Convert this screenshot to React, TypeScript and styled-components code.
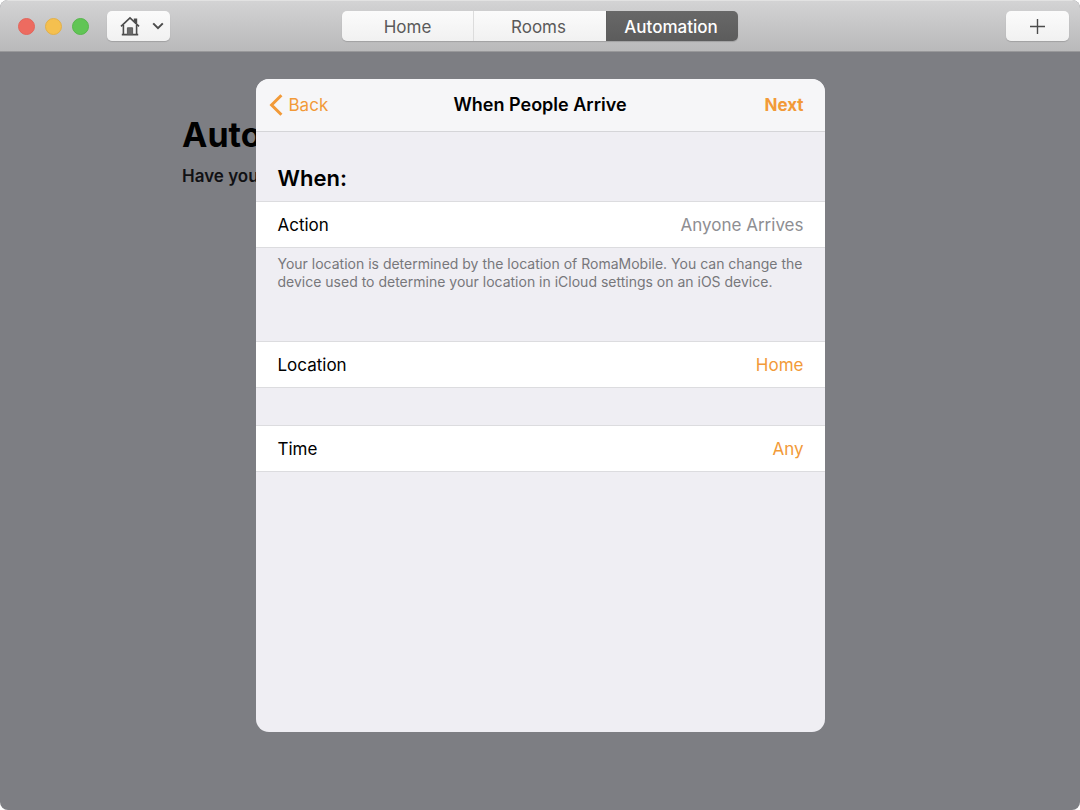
import React from "react";
import styled, { createGlobalStyle } from "styled-components";

const GlobalStyle = createGlobalStyle`
  *, *::before, *::after { box-sizing: border-box; }
  html { background: #fff; }
  body {
    margin: 0;
    font-family: Inter, "Liberation Sans", sans-serif;
    color: #000;
  }
  button { font-family: inherit; cursor: pointer; }
  h1, h2, p { margin: 0; }
`;

const Window = styled.div`
  display: flex;
  flex-direction: column;
  min-height: 100vh;
  overflow: hidden;
  border-radius: 8px;
  background: #7d7e83;
`;

const Toolbar = styled.header`
  display: grid;
  grid-template-columns: 1fr auto 1fr;
  align-items: center;
  height: 52px;
  padding: 0 11px 0 18px;
  border-top: 1px solid #e2e2e2;
  border-bottom: 1px solid #98989a;
  background: linear-gradient(#d3d3d4, #b9b9ba);
`;

const ToolbarStart = styled.div`
  display: flex;
  align-items: center;
  gap: 18px;
`;

const TrafficLights = styled.div`
  display: flex;
  gap: 10px;
`;

const Light = styled.button<{ $fill: string; $edge: string }>`
  width: 17px;
  height: 17px;
  padding: 0;
  border: 1px solid ${(p) => p.$edge};
  border-radius: 50%;
  background: ${(p) => p.$fill};
`;

const ToolButton = styled.button`
  display: flex;
  align-items: center;
  justify-content: center;
  width: 63px;
  height: 30px;
  padding: 0;
  border: 0;
  border-radius: 5px;
  background: linear-gradient(#fbfbfb, #f1f1f1);
  box-shadow: 0 1px 1px rgba(0, 0, 0, 0.16);
  color: #4c4c4c;
`;

const AddButton = styled(ToolButton)`
  justify-self: end;
`;

const Segments = styled.nav`
  display: grid;
  grid-template-columns: 131px 133px 132px;
  height: 30px;
  margin-left: -7px;
  border-radius: 5px;
  box-shadow: 0 1px 1px rgba(0, 0, 0, 0.16);
`;

const Segment = styled.button<{ $selected?: boolean }>`
  padding: 1px 3px 0 0;
  border: 0;
  border-left: 1px solid ${(p) => (p.$selected ? "#5f5f5f" : "#dcdcdc")};
  background: ${(p) =>
    p.$selected ? "linear-gradient(#686868, #5c5c5c)" : "linear-gradient(#fbfbfb, #f1f1f1)"};
  color: ${(p) => (p.$selected ? "#fff" : "#5a5a5a")};
  font-size: 17px;
  line-height: 20px;
  font-weight: ${(p) => (p.$selected ? 500 : 400)};
  &:first-child { padding-right: 0; border-left: 0; border-radius: 5px 0 0 5px; }
  &:last-child { border-radius: 0 5px 5px 0; }
`;

const Stage = styled.main`
  position: relative;
  flex: 1;
  padding: 60px 24px 27px 182px;
`;

const PageTitle = styled.h1`
  font-size: 34px;
  line-height: 46px;
  font-weight: 700;
`;

const PageText = styled.p`
  margin-top: 6px;
  font-size: 17px;
  line-height: 24px;
  font-weight: 600;
  color: #111114;
`;

const Overlay = styled.div`
  position: absolute;
  inset: 0;
  display: flex;
  justify-content: center;
  align-items: flex-start;
  padding: 27px 24px;
`;

const Sheet = styled.section`
  width: 100%;
  max-width: 569px;
  min-height: 653px;
  overflow: hidden;
  border-radius: 13px;
  background: #efeef3;
`;

const SheetHeader = styled.div`
  display: grid;
  grid-template-columns: 1fr auto 1fr;
  align-items: center;
  height: 53px;
  padding: 0 21px 0 13px;
  border-bottom: 1px solid #d5d5d8;
  background: #f6f6f8;
`;

const SheetTitle = styled.h2`
  padding-left: 8px;
  font-size: 18px;
  line-height: 24px;
  font-weight: 600;
`;

const LinkButton = styled.button<{ $strong?: boolean }>`
  display: flex;
  align-items: center;
  gap: 6px;
  justify-self: ${(p) => (p.$strong ? "end" : "start")};
  padding: 0;
  border: 0;
  background: none;
  color: #f29a38;
  font-size: 17px;
  line-height: 24px;
  font-weight: ${(p) => (p.$strong ? 700 : 400)};
`;

const GroupTitle = styled.h2`
  padding: 32px 21px 9px 22px;
  font-size: 22px;
  line-height: 28px;
  font-weight: 600;
`;

const Row = styled.div`
  display: flex;
  align-items: center;
  justify-content: space-between;
  height: 47px;
  padding: 0 21px 0 22px;
  border: solid #dcdcdf;
  border-width: 1px 0;
  background: #fff;
  font-size: 17px;
  line-height: 24px;
`;

const Value = styled.span`
  color: #8e8e92;
`;

const Note = styled.p`
  padding: 7px 20px 50px 22px;
  font-size: 14px;
  line-height: 18px;
  color: #77777b;
`;

const Gap = styled.div`
  height: 37px;
`;

const HouseIcon = () => (
  <svg width="20" height="20" viewBox="0 0 20 20" fill="none" stroke="#4c4c4c" strokeWidth="1.6" aria-hidden="true">
    <path d="M1 10.4 10 1.8l9 8.6" />
    <path d="M14.6 5.4V3.4h1.8v3.8" fill="#4c4c4c" />
    <path d="M3.4 9v9.6M16.6 9v9.6" />
    <path d="M1.8 18.6h16.4" />
    <path d="M7.4 11.8h5.2v6.8H7.4z" fill="#6a6a6a" stroke="#5c5c5c" strokeWidth="1" />
  </svg>
);

const HomeMenu = styled(ToolButton)`
  gap: 12px;
  padding-left: 7px;
`;

export default function App() {
  return (
    <>
      <GlobalStyle />
      <Window>
        <Toolbar>
          <ToolbarStart>
            <TrafficLights>
              <Light aria-label="Close" $fill="#ed6b60" $edge="#e2665c" />
              <Light aria-label="Minimize" $fill="#f5c04f" $edge="#e2b04a" />
              <Light aria-label="Zoom" $fill="#61c555" $edge="#58b64d" />
            </TrafficLights>
            <HomeMenu aria-label="Choose home">
              <HouseIcon />
              <svg width="12" height="8" viewBox="0 0 12 8" fill="none" stroke="currentColor" strokeWidth="2" aria-hidden="true">
                <path d="m1.2 1.4 4.8 4.8 4.8-4.8" />
              </svg>
            </HomeMenu>
          </ToolbarStart>
          <Segments aria-label="Sections">
            <Segment>Home</Segment>
            <Segment>Rooms</Segment>
            <Segment $selected aria-current="page">Automation</Segment>
          </Segments>
          <AddButton aria-label="Add">
            <svg width="16" height="16" viewBox="0 0 16 16" fill="none" stroke="currentColor" strokeWidth="1.4" aria-hidden="true">
              <path d="M7.5 1v15M0 8.5h15" />
            </svg>
          </AddButton>
        </Toolbar>
        <Stage>
          <PageTitle>Automation</PageTitle>
          <PageText>Have your</PageText>
          <Overlay>
            <Sheet role="dialog" aria-labelledby="sheet-title">
              <SheetHeader>
                <LinkButton>
                  <svg width="14" height="22" viewBox="0 0 14 22" fill="none" stroke="currentColor" strokeWidth="3" aria-hidden="true">
                    <path d="M12.4 1.2 2.6 11l9.8 9.8" />
                  </svg>
                  Back
                </LinkButton>
                <SheetTitle id="sheet-title">When People Arrive</SheetTitle>
                <LinkButton $strong>Next</LinkButton>
              </SheetHeader>
              <GroupTitle>When:</GroupTitle>
              <Row>
                <span>Action</span>
                <Value>Anyone Arrives</Value>
              </Row>
              <Note>
                Your location is determined by the location of RomaMobile. You can change the
                device used to determine your location in iCloud settings on an iOS device.
              </Note>
              <Row>
                <span>Location</span>
                <LinkButton>Home</LinkButton>
              </Row>
              <Gap />
              <Row>
                <span>Time</span>
                <LinkButton>Any</LinkButton>
              </Row>
            </Sheet>
          </Overlay>
        </Stage>
      </Window>
    </>
  );
}
